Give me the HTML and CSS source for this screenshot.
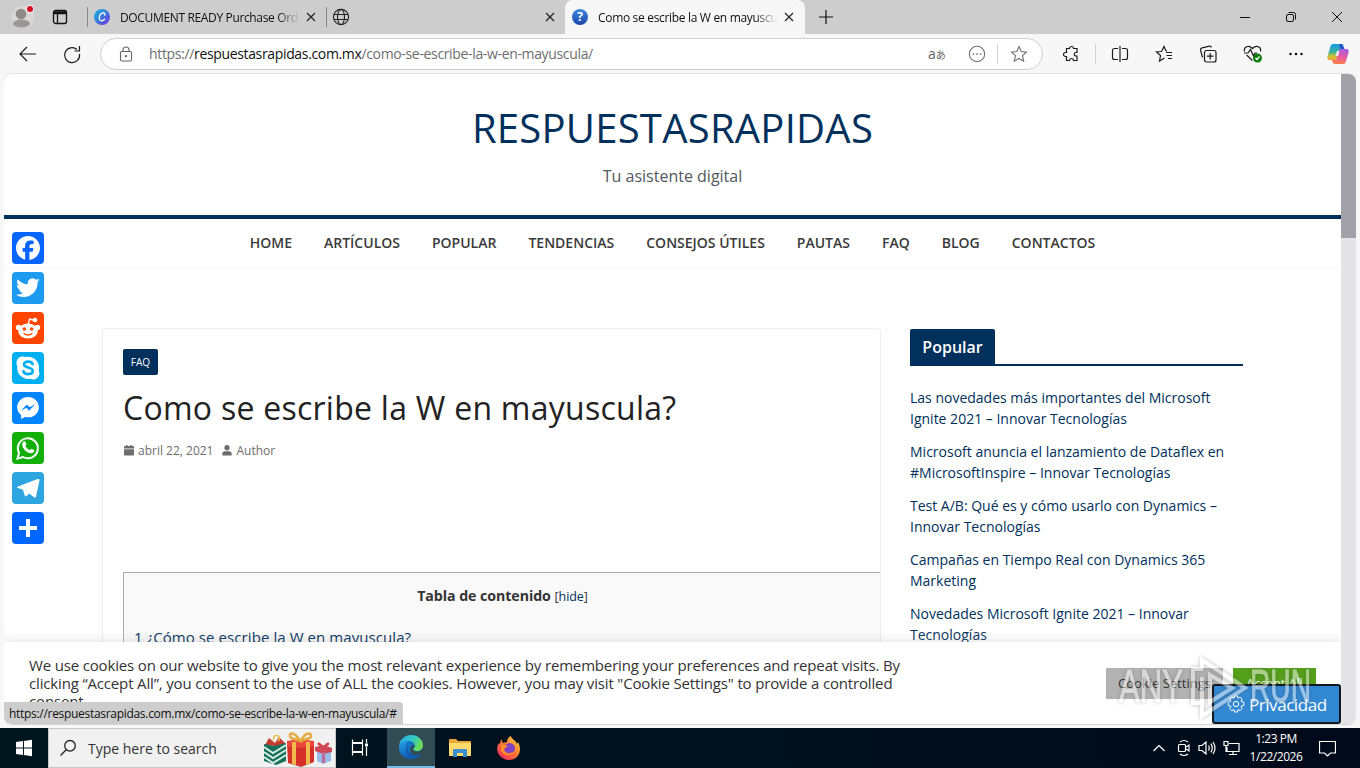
FILE: index.html
```html
<!DOCTYPE html>
<html lang="es">
<head>
<meta charset="utf-8">
<title>Como se escribe la W en mayuscula?</title>
<link rel="stylesheet" href="styles.css">
</head>
<body>
<div class="tabstrip">
  <svg class="profile" width="24" height="28" viewBox="0 0 24 28"><circle cx="12" cy="14" r="11" fill="#d9d8d6"/><circle cx="10" cy="11" r="5.3" fill="#8d8a87"/><ellipse cx="10.500" cy="20.500" rx="8.500" ry="4" fill="#9a9794"/><circle cx="19" cy="6" r="4" fill="#eee"/><circle cx="19" cy="6" r="3" fill="#d50f25"/></svg>
  <svg class="tabmenu" width="16" height="16" viewBox="0 0 16 16" fill="none" stroke="#111" stroke-width="1.300"><rect x="1.500" y="1.500" width="13" height="13" rx="2"/><path d="M1.500 3h13M1.500 4.500h13M5.500 4v10" /></svg>
  <div class="tab tab-one">
    <svg width="16" height="16" viewBox="0 0 16 16"><defs><linearGradient id="cv" x1="0" y1="0" x2="1" y2="1"><stop offset="0" stop-color="#12b9d5"/><stop offset=".5" stop-color="#3b79df"/><stop offset="1" stop-color="#7a2be0"/></linearGradient></defs><circle cx="8" cy="8" r="8" fill="url(#cv)"/><path d="M10.800 6.200c.3-1.800-.8-2.600-2-2.400C6.500 4.200 5 7 5.200 9.300c.3 2.900 3.200 3.600 5.500.9" fill="none" stroke="#fff" stroke-width="1.300" stroke-linecap="round"/></svg>
    <span class="tab-title t1">DOCUMENT READY Purchase Order</span>
    <svg class="x" width="10" height="10" viewBox="0 0 10 10"><path d="M1 1l8 8M9 1l-8 8"/></svg>
  </div>
  <div class="tab tab-two">
    <svg width="18" height="18" viewBox="0 0 18 18" fill="none" stroke="#222" stroke-width="1.100"><circle cx="9" cy="9" r="7.600"/><ellipse cx="9" cy="9" rx="3.500" ry="7.600"/><path d="M2 6.500h14M2 11.500h14"/></svg>
    <svg class="x" width="10" height="10" viewBox="0 0 10 10"><path d="M1 1l8 8M9 1l-8 8"/></svg>
  </div>
  <div class="tab tab-active">
    <span class="question">?</span>
    <span class="tab-title t3">Como se escribe la W en mayuscula</span>
    <svg class="x" width="10" height="10" viewBox="0 0 10 10"><path d="M1 1l8 8M9 1l-8 8"/></svg>
  </div>
  <svg class="plus" width="14" height="14" viewBox="0 0 14 14"><path d="M7 0v14M0 7h14" stroke="#111" stroke-width="1.200"/></svg>
  <div class="winctl">
    <svg width="46" height="34" viewBox="0 0 46 34"><path d="M18 17.500h10"/></svg>
    <svg width="46" height="34" viewBox="0 0 46 34"><rect x="18.500" y="14.500" width="7" height="7" rx="1.500"/><path d="M20.500 12.500h5a2 2 0 0 1 2 2v5"/></svg>
    <svg width="46" height="34" viewBox="0 0 46 34"><path d="M18 12l10 10M28 12l-10 10"/></svg>
  </div>
</div>
<div class="toolbar">
  <svg width="44" height="32" viewBox="0 0 44 32" class="ico back"><path d="M20 16h16M27 9l-7 7 7 7"/></svg>
  <svg width="44" height="32" viewBox="0 0 44 32" class="ico"><path d="M27 11.500A7.500 7.500 0 1 0 29.500 16M29.500 8v5h-5"/></svg>
  <div class="address">
    <svg class="lock" width="14" height="16" viewBox="0 0 14 16"><rect x="1.500" y="5.500" width="11" height="9.500" rx="1.500"/><path d="M4 5.500V4a3 3 0 0 1 6 0v1.500"/><circle cx="7" cy="10.200" r=".6"/></svg>
    <span class="url">https://<b>respuestasrapidas.com.mx</b>/como-se-escribe-la-w-en-mayuscula/</span>
    <span class="translate">a<small>あ</small></span>
    <svg class="gico more" width="18" height="18" viewBox="0 0 18 18"><circle cx="9" cy="9" r="7.700"/><path d="M4.700 9h1.500M8.300 9h1.500M11.800 9h1.500" stroke-width="1.600"/></svg>
    <i class="sep"></i>
    <svg class="gico star" width="18" height="18" viewBox="0 0 18 18"><path d="M9 1.500l2.200 5 5.300.6-4 3.600 1.200 5.500L9 13.500l-4.700 2.700 1.200-5.500-4-3.600 5.300-.6z"/></svg>
  </div>
  <svg class="ico ext" width="18" height="18" viewBox="0 0 18 18"><path d="M4.500 3.500h3a2 2 0 0 1 4 0H15v4h-1a1.700 1.700 0 0 0 0 3.500h1v4.500h-3.500a2 2 0 0 0-4 0h-3v-4h-1a2 2 0 0 1 0-4h1z"/></svg>
  <i class="sep sep2"></i>
  <svg class="ico split" width="18" height="18" viewBox="0 0 18 18"><path d="M7 3.500H3.500a2 2 0 0 0-2 2v7a2 2 0 0 0 2 2H7M11 3.500h3.500a2 2 0 0 1 2 2v7a2 2 0 0 1-2 2H11M9 1v16"/></svg>
  <svg class="ico fav" width="18" height="18" viewBox="0 0 18 18"><path d="M9.500 13l-5 3 1-5.500-4-3.500 5-.5L9 1.500l2 4.500M11 7.500h6M11.500 10.500H17M13 13.500h4M11 6h1"/></svg>
  <svg class="ico coll" width="18" height="18" viewBox="0 0 18 18"><rect x="5.500" y="5.500" width="11.500" height="11.500" rx="2"/><path d="M11.200 8v6.500M8 11.200h6.500M3.500 12.500L1.500 5a2 2 0 0 1 1.500-2.200L10.500 1.200a2 2 0 0 1 2 1.300"/></svg>
  <svg class="ico heart" width="20" height="20" viewBox="0 0 20 20"><path d="M1.500 7.500C.5 3 5.500.5 9.500 4.500c4-4 9-1.500 8 3M3.500 11l6 5.500M1 9h4l2.500-3.500L10.500 12l1.500-3h2"/><circle cx="14.500" cy="14" r="4.500" fill="#107c10" stroke="none"/><path d="M12.500 14l1.500 1.500 2.500-3" stroke="#fff"/></svg>
  <svg class="dots" width="16" height="4" viewBox="0 0 16 4"><circle cx="2.500" cy="2" r="1.200"/><circle cx="8" cy="2" r="1.200"/><circle cx="13.500" cy="2" r="1.200"/></svg>
  <svg class="copilot" width="22" height="22" viewBox="0 0 22 22"><defs><linearGradient id="c1" x1="0" y1="0" x2="0" y2="1"><stop offset="0" stop-color="#159bea"/><stop offset=".5" stop-color="#3bb39a"/><stop offset=".75" stop-color="#c8c834"/><stop offset="1" stop-color="#f6a031"/></linearGradient><linearGradient id="c2" x1="0.500" y1="0" x2="0.300" y2="1"><stop offset="0" stop-color="#a65ae0"/><stop offset=".5" stop-color="#ea5b9c"/><stop offset="1" stop-color="#fb8247"/></linearGradient></defs><path d="M6 1h8c2 0 2 1 2.600 3l.8 2H13l-3 9c-1 2-2 2-4 2H3c-3 0-3-2-2.200-5L3 5c.5-2 1-4 3-4z" fill="url(#c1)"/><path d="M12 1h2c2 0 2 1 2.600 3l.8 2H13z" fill="#2457c8"/><path d="M14 6h5c3 0 3 2 2.200 5L19 18c-.5 2-1 3-3 3H8c-2 0-2-1-2.600-2.500L5 17h4l3-9c.5-1.500 1-2 2-2z" fill="url(#c2)"/><path d="M10 8h2.500l-1.500 5H8.500z" fill="#f7eaf2"/></svg>
</div>
<div class="frame">
  <div class="page">
    <header class="site-head">
      <div class="site-title">RESPUESTASRAPIDAS</div>
      <div class="site-sub">Tu asistente digital</div>
    </header>
    <nav class="menu"><a>HOME</a><a>ARTÍCULOS</a><a>POPULAR</a><a>TENDENCIAS</a><a>CONSEJOS ÚTILES</a><a>PAUTAS</a><a>FAQ</a><a>BLOG</a><a>CONTACTOS</a></nav>
    <main class="cols">
      <article class="card">
        <span class="tag">FAQ</span>
        <h1>Como se escribe la W en mayuscula?</h1>
        <div class="meta">
          <svg width="10" height="11" viewBox="0 0 10 11"><path d="M2 0h1.500v1h3V0H8v1h1.200q.8 0 .8.800V3.500H0V1.800Q0 1 .8 1H2zM0 4.300h10v5.200q0 1-1 1H1q-1 0-1-1z"/></svg><span class="date">abril 22, 2021</span>
          <svg width="10" height="11" viewBox="0 0 10 11"><circle cx="5" cy="2.700" r="2.600"/><path d="M.3 10.500V9q0-2.700 2.700-2.700h4q2.700 0 2.700 2.700v1.500z"/></svg><span>Author</span>
        </div>
        <section class="toc">
          <p class="toc-title"><b>Tabla de contenido</b> <span>[<a>hide</a>]</span></p>
          <p class="toc-item">1 ¿Cómo se escribe la W en mayuscula?</p>
        </section>
      </article>
      <aside class="side">
        <h3><span>Popular</span></h3>
        <p>Las novedades más importantes del Microsoft<br>Ignite 2021 – Innovar Tecnologías</p>
        <p>Microsoft anuncia el lanzamiento de Dataflex en<br>#MicrosoftInspire – Innovar Tecnologías</p>
        <p>Test A/B: Qué es y cómo usarlo con Dynamics –<br>Innovar Tecnologías</p>
        <p>Campañas en Tiempo Real con Dynamics 365<br>Marketing</p>
        <p>Novedades Microsoft Ignite 2021 – Innovar<br>Tecnologías</p>
      </aside>
    </main>
    <div class="share">
      <svg class="fb" viewBox="0 0 32 32"><path fill="#fff" d="M28 16c0-6.627-5.373-12-12-12S4 9.373 4 16c0 5.628 3.875 10.350 9.101 11.647v-7.980h-2.474V16H13.100v-1.580c0-4.085 1.849-5.978 5.859-5.978.76 0 2.072.15 2.608.298v3.325c-.283-.03-.775-.045-1.386-.045-1.967 0-2.728.745-2.728 2.683V16h3.920l-.673 3.667h-3.247v8.245C23.395 27.195 28 22.135 28 16"/></svg>
      <svg class="tw" viewBox="0 0 32 32"><path fill="#fff" d="M28 8.557a10 10 0 0 1-2.828.775 4.930 4.930 0 0 0 2.166-2.725 9.700 9.700 0 0 1-3.130 1.194 4.920 4.920 0 0 0-3.593-1.550 4.924 4.924 0 0 0-4.794 6.049c-4.090-.21-7.720-2.170-10.150-5.150a4.940 4.940 0 0 0-.665 2.477c0 1.710.870 3.214 2.190 4.100a5 5 0 0 1-2.230-.616v.06c0 2.390 1.700 4.380 3.952 4.830-.414.115-.850.174-1.297.174q-.476-.001-.928-.860a4.935 4.935 0 0 0 4.600 3.420 9.900 9.900 0 0 1-6.114 2.107q-.597 0-1.175-.068a13.950 13.950 0 0 0 7.550 2.213c9.056 0 14.010-7.507 14.010-14.013q0-.320-.015-.637c.960-.695 1.795-1.560 2.455-2.550z"/></svg>
      <svg class="rd" viewBox="0 0 32 32"><ellipse cx="16" cy="19" rx="9.800" ry="7.500" fill="#fff"/><circle cx="6.500" cy="15.500" r="2.700" fill="#fff"/><circle cx="25.500" cy="15.500" r="2.700" fill="#fff"/><circle cx="23" cy="8" r="2.300" fill="#fff"/><path d="M16 13l1.500-6 4 1" fill="none" stroke="#fff" stroke-width="1.300"/><circle cx="12.300" cy="17" r="1.700" fill="#ff4500"/><circle cx="19.700" cy="17" r="1.700" fill="#ff4500"/><path d="M12 21.500q4 3 8 0" stroke="#ff4500" stroke-width="1.300" fill="none" stroke-linecap="round"/></svg>
      <svg class="sk" viewBox="0 0 32 32"><path fill="#fff" d="M4.500 10.500A6.300 6.300 0 0 1 13.500 5a11 11 0 0 1 13.200 13.500 6.300 6.300 0 0 1-8.500 8.300A11 11 0 0 1 5.300 14.200a6 6 0 0 1-.8-3.700z"/><path d="M20.500 12.200c-.8-3.600-8.800-3.300-8.500.4.300 3.700 8.800 2 8.800 6.500 0 4-8.600 4.200-9.400.2" fill="none" stroke="#00aff0" stroke-width="2.700" stroke-linecap="round"/></svg>
      <svg class="ms" viewBox="0 0 32 32"><path fill="#fff" d="M16 5C9.986 5 5.110 9.560 5.110 15.182c0 3.200 1.580 6.054 4.046 7.920V27l3.716-2.060c.990.276 2.040.425 3.128.425 6.014 0 10.890-4.560 10.890-10.183S22.013 5 16 5m1.147 13.655L14.330 15.730l-5.423 3 5.946-6.310 2.816 2.925 5.420-3z"/></svg>
      <svg class="wa" viewBox="0 0 32 32"><path fill="none" stroke="#fff" stroke-width="2" d="M5.500 26.500l1.500-5.600A10 10 0 1 1 11 25z"/><path fill="#fff" d="M11.600 9.600c.7-.7 1.500-.5 1.800.2l1 2.400c.2.600-.9 1.600-1 1.900.8 1.900 2.400 3.300 4.300 4 .5 0 1.300-1.600 1.800-1.400l2.400 1.200c1.200.600-.500 3.100-2.300 3.300-4.600.3-9.600-5.200-9.400-8.500 0-1.200.6-2.200 1.400-3.100z"/></svg>
      <svg class="tg" viewBox="0 0 32 32"><path fill="#fff" d="M25.515 6.896 6.027 14.410c-1.330.534-1.322 1.276-.243 1.606l5 1.560 1.972 6.048c.240.660.122.922.815.922.535 0 .770-.244 1.070-.533l2.500-2.430 5.100 3.800c.940.519 1.616.25 1.850-.87l3.330-15.700c.340-1.365-.520-1.984-1.416-1.580z"/></svg>
      <svg class="pl" viewBox="0 0 32 32"><path fill="#fff" d="M14 7h4v18h-4z"/><path fill="#fff" d="M7 14h18v4H7z"/></svg>
    </div>
    <div class="cookies">
      <p>We use cookies on our website to give you the most relevant experience by remembering your preferences and repeat visits. By<br>clicking “Accept All”, you consent to the use of ALL the cookies. However, you may visit "Cookie Settings" to provide a controlled<br>consent.</p>
      <div class="btns"><span class="set">Cookie Settings</span><span class="acc">Accept All</span></div>
    </div>
    <div class="privacy"><svg width="18" height="18" viewBox="0 0 18 18" fill="none" stroke="#fff"><circle cx="9" cy="9" r="2.700"/><path d="M7.500 1h3l.5 2.300 2-1.300 2.200 2.200L14 6.300l2.800.9v3.300L14 11.200l1.200 2.300-2.200 2.200-2-1.200-.5 2.500h-3L7 14.500l-2.200 1.200-2.200-2.200L4 11.300l-2.800-.8V7.200L4 6.300 2.600 4.200 4.800 2 7 3.300z" stroke-linejoin="round"/></svg><span>Privacidad</span></div>
    <div class="status">https://respuestasrapidas.com.mx/como-se-escribe-la-w-en-mayuscula/#</div>
  </div>
  <div class="scroll"><i></i></div>
</div>
<svg class="mark" width="220" height="72" viewBox="0 0 220 72"><g fill="#fff" stroke="#fff"><text x="19" y="53" textLength="64" lengthAdjust="spacingAndGlyphs">ANY</text><text x="150" y="53" textLength="61" lengthAdjust="spacingAndGlyphs">RUN</text></g><path d="M103 20h-10v34h10M102 28v39l43-28-11-8M102 20V11l43 28M110 26v27l22-14z" fill="none" stroke="#fff" stroke-width="4"/></svg>
<div class="taskbar">
  <svg class="start" width="48" height="40" viewBox="0 0 48 40"><path fill="#fff" d="M16 14l7-1v6.500h-7zM24 12.900l8-1.100v7.700h-8zM16 20.500h7V27l-7-1zM24 20.500h8v7.700L24 27z"/></svg>
  <div class="search">
    <svg width="18" height="18" viewBox="0 0 18 18" fill="none" stroke="#222" stroke-width="1.300"><circle cx="11" cy="6.800" r="5.300"/><path d="M7.200 10.700L1.500 16.500"/></svg>
    <span>Type here to search</span>
    <svg class="gifts" width="70" height="36" viewBox="0 0 70 36"><path d="M2 13l4-7 6 5 4-6 6 6v4z" fill="#c43a2f"/><path d="M11 8a3 3 0 1 1 4 1" fill="none" stroke="#e8c14b" stroke-width="1.500"/><path d="M1 12l10 2 12-3v18l-10 4-12-4z" fill="#17705a"/><path d="M1 15l9 6 13-8M1 20l9 6 13-8M1 25l9 6 13-8" fill="none" stroke="#d7efe4" stroke-width="2"/><path d="M24 12l12 2 15-3v19l-13 5-13-4z" fill="#d42f28"/><path d="M24 9l12-2 15 2v5l-14 2-13-2z" fill="#e9483a"/><path d="M29 10h4v23l-4-1zM43 10h4v22l-4 1z" fill="#f0b94c"/><path d="M37 9C31-2 24 1 28 6zM38 9C43-2 51 1 47 6z" fill="none" stroke="#e5a93e" stroke-width="2.500"/><path d="M54 18l7 1 7-1v11l-8 3-6-3z" fill="#9bbbe8"/><path d="M52 15l9-2 8 3v4l-9 2-8-3z" fill="#d04858"/><path d="M60 14c-5-7-8-2-3 0M61 14c4-7 8-2 3 0" fill="#d83c3c"/><path d="M59 20h3v11h-3z" fill="#bf6a98"/></svg>
  </div>
  <svg class="tv" width="48" height="40" viewBox="0 0 48 40" fill="none" stroke="#fff" stroke-width="1.200"><path d="M16.500 11.500v3h10v-3M16.500 27.500v-3h10v3M16.500 15.500h10v8h-10zM30.500 11v4M30.500 19v9"/><path d="M29 15.500h3v3h-3z" fill="#fff" stroke="none"/></svg>
  <div class="edge"><svg width="26" height="26" viewBox="0 0 26 26"><defs><linearGradient id="e1" x1="0" y1="0" x2="1" y2=".4"><stop offset="0" stop-color="#2aa9e8"/><stop offset=".6" stop-color="#35c9c6"/><stop offset="1" stop-color="#6bdd55"/></linearGradient><linearGradient id="e2" x1="0" y1="0" x2="0.300" y2="1"><stop offset="0" stop-color="#23a4e6"/><stop offset="1" stop-color="#0f5db5"/></linearGradient></defs><circle cx="13" cy="13" r="12" fill="#1473c4"/><path d="M1 12C2 5 7 1 13 1c7 0 12 5 12 10 0 4-3 6-6 6-3 0-4-1-4-2 1-1 2-2 2-3 0-3-3-5-7-5-4 0-8 2-9 5z" fill="url(#e1)"/><path d="M1 12c2-4 6-5 9-5-4 3-4 14 6 17.500C8 27 0 20 1 12z" fill="url(#e2)"/><path d="M10 12c-2 5 2 9 7 9 3 0 5-1 7-2-2 4-5 5.500-8 6-8-2-9-10-6-13z" fill="#1458a5"/><path d="M15 15c0 2 4 3 7 2 2-1 3-3 3-4l1 4-3 3-5 1c-4 0-6-3-6-5 0-3 2-5 4-5 1 1 0 3-1 4z" fill="#334b52"/></svg></div>
  <svg class="folder" width="22" height="18" viewBox="0 0 22 18"><path d="M0 1q0-1 1-1h6l2 2h12q1 0 1 1v14H0z" fill="#e8a93a"/><path d="M0 4h22v13H0z" fill="#ffd96b"/><path d="M4 18v-7q0-1 1-1h12q1 0 1 1v7h-4v-4H8v4z" fill="#3e8ed0"/></svg>
  <svg class="fox" width="24" height="24" viewBox="0 0 24 24"><defs><linearGradient id="f1" x1="1" y1="0" x2="0.200" y2="1"><stop offset="0" stop-color="#ffe04a"/><stop offset=".45" stop-color="#ff8a2b"/><stop offset="1" stop-color="#f0265e"/></linearGradient></defs><path d="M4 3l2 4 4-1c0-3 2-5 4-6 0 3 5 4 6 8l1-2c5 9 0 18-9 18S-2 15 1 9l1-2 1 1z" fill="url(#f1)"/><circle cx="12.500" cy="12.500" r="5.500" fill="#8241c4"/><path d="M4 9c3-1 4 0 7 1-1 2-4 1-4 4 2 4 7 4 10 1-1 5-10 6-13 0z" fill="#ff8c24"/></svg>
  <div class="tray">
    <svg width="14" height="8" viewBox="0 0 14 8"><path d="M1.500 7L7 1.500 12.500 7"/></svg>
    <svg class="cam" width="14" height="18" viewBox="0 0 14 18"><rect x="1.500" y="5.500" width="7" height="7" rx="1"/><path d="M9 8l3-2v6l-3-2M3 3q4-3 8 0M3 15q4 3 8 0"/></svg>
    <svg class="vol" width="18" height="16" viewBox="0 0 18 16"><path d="M1 5.500h3l4-3.500v12L4 10.500H1zM10.500 5.500q1.500 2.500 0 5M12.800 3.700q3 4.300 0 8.600M15 2q4 6 0 12"/></svg>
    <svg class="net" width="17" height="16" viewBox="0 0 17 16"><path d="M6 3.500h10v8H4V7M10 11.500v3M6 14.500h8M1 1.500h4v4H1zM3 6v6"/></svg>
    <div class="clock"><span>1:23 PM</span><span>1/22/2026</span></div>
    <svg class="note" width="17" height="17" viewBox="0 0 17 17"><path d="M.5 1.500h16v11.500h-5l-3 3-3-3h-5z"/></svg>
  </div>
</div>
</body>
</html>
```
FILE: styles.css
```css
* { box-sizing: border-box; }
body { margin: 0; width: 1360px; height: 768px; overflow: hidden; display: flex; flex-direction: column; position: relative; background: #f7f7f7; font-family: "Open Sans", "Noto Sans", sans-serif; }
svg { flex: none; display: block; }
p, h1, h3 { margin: 0; }

/* Browser tabs */
.tabstrip { height: 34px; flex: none; display: flex; align-items: center; background: #cdcdcd; color: #111; font-size: 12px; }
.profile { margin-left: 11px; }
.tabmenu { margin-left: 17px; }
.tab { display: flex; align-items: center; white-space: nowrap; }
.tab .x { stroke: #222; stroke-width: 1.2; margin-left: auto; }
.tab-title { overflow: hidden; -webkit-mask-image: linear-gradient(90deg, #000 88%, transparent); mask-image: linear-gradient(90deg, #000 88%, transparent); }
.tab-one { margin-left: 19px; width: 239px; height: 20px; border-left: 1px solid #888; padding-left: 6px; }
.t1 { width: 179px; margin-left: 10px; letter-spacing: -0.35px; }
.tab-one .x { margin-right: 10px; }
.tab-two { width: 239px; height: 20px; border-left: 1px solid #888; padding-left: 5px; }
.tab-two .x { margin-right: 10px; }
.tab-active { width: 240px; height: 34px; background: #f7f7f7; border-radius: 8px 8px 0 0; padding-left: 7px; }
.tab-active .x { margin-right: 11px; }
.question { width: 16px; height: 16px; border-radius: 50%; background: linear-gradient(#3f8be0, #1746a8); color: #fff; font-weight: 700; font-size: 12px; line-height: 16px; text-align: center; }
.t3 { width: 179px; margin-left: 10px; letter-spacing: -0.32px; }
.plus { margin-left: 14px; }
.winctl { display: flex; margin-left: auto; fill: none; stroke: #111; }

/* Toolbar */
.toolbar { height: 39px; flex: none; display: flex; align-items: center; }
.ico { fill: none; stroke: #1c1c1c; stroke-width: 1.2; }
.back { margin-right: 6px; }
.address { width: 943px; height: 32px; margin-left: 6px; border: 1px solid #d0d0d0; border-radius: 16px; background: #fff; display: flex; align-items: center; padding-left: 18px; }
.lock { fill: none; stroke: #666; stroke-width: 1.1; }
.url { margin-left: 16px; width: 779px; font-size: 14px; letter-spacing: -0.345px; color: #6e6e6e; white-space: nowrap; }
.url b { font-weight: 400; color: #111; }
.translate { width: 20px; font-size: 14px; line-height: 18px; color: #666; white-space: nowrap; }
.translate small { font-family: "Noto Sans CJK JP", sans-serif; font-size: 10px; line-height: 10px; }
.gico { fill: none; stroke: #707070; stroke-width: 1.1; }
.more { margin-left: 20px; }
.sep { width: 1px; height: 20px; background: #d2d2d2; margin-left: 11px; }
.star { margin-left: 12px; }
.ext { margin-left: 19px; }
.sep2 { margin-left: 15px; }
.split { margin-left: 15px; }
.fav { margin-left: 26px; }
.coll { margin-left: 26px; }
.heart { margin-left: 26px; }
.dots { margin-left: 25px; }
.copilot { margin-left: 23px; }

/* Page viewport */
.frame { height: 652px; flex: none; margin: 0 4px; border-top: 1px solid #e2e2e2; border-bottom: 1px solid #d4d4d4; border-radius: 8px; overflow: hidden; display: flex; background: #fff; }
.page { width: 1337px; height: 650px; position: relative; overflow: hidden; }
.scroll { width: 15px; background: #e4e4e6; }
.scroll i { display: block; height: 164px; background: #a2a1a9; }
.site-head { height: 145px; border-bottom: 4px solid #00305b; text-align: center; padding-top: 27px; }
.site-title { font-size: 40px; line-height: 54px; letter-spacing: 0.25px; color: #00305b; }
.site-sub { font-size: 16px; line-height: 24px; margin-top: 9px; color: #51575d; }
.menu { height: 49px; border-bottom: 1px solid #f6f6f6; display: flex; justify-content: center; gap: 32px; font-size: 14px; font-weight: 600; line-height: 48px; color: #3a3a3a; }
.cols { display: flex; padding: 60px 0 0 98px; }
.card { width: 779px; height: 600px; border: 1px solid #eee; border-radius: 4px; padding: 20px 0 0 20px; display: flex; flex-direction: column; align-items: flex-start; overflow: hidden; }
.tag { width: 35px; height: 26px; background: #00305b; border-radius: 2px; color: #fff; font-size: 10px; font-weight: 500; line-height: 27px; text-align: center; }
.card h1 { margin-top: 12px; font-size: 32px; line-height: 42px; letter-spacing: 0.26px; font-weight: 400; color: #222; white-space: nowrap; }
.meta { margin-top: 12px; height: 18px; display: flex; align-items: center; font-size: 12px; color: #6d6d6d; padding-left: 1px; fill: #6d6d6d; }
.meta span { margin-left: 4px; }
.meta .date { margin-right: 9px; }
.toc { margin-top: 113px; width: 758px; height: 300px; background: #f9f9f9; border: 1px solid #aaa; border-right: 0; padding: 10px; color: #333; }
.toc-title { text-align: center; font-size: 14.2px; line-height: 26px; letter-spacing: -0.06px; }
.toc-title span { font-size: 12.5px; }
.toc-title a, .toc-item { color: #00305b; }
.toc-item { font-size: 15px; line-height: 24px; margin-top: 15px; letter-spacing: 0.08px; }
.side { width: 333px; margin-left: 29px; color: #00305b; font-size: 14px; line-height: 21px; white-space: nowrap; }
.side h3 { display: flex; height: 37px; margin-top: 1px; border-bottom: 2px solid #00305b; margin-bottom: 21px; }
.side h3 span { width: 85px; background: #00305b; color: #fff; font-size: 16px; font-weight: 600; line-height: 36px; text-align: center; border-radius: 2px 2px 0 0; }
.side p { margin-bottom: 12px; }

/* Floating share column */
.share { position: absolute; left: 8px; top: 158px; display: flex; flex-direction: column; gap: 8px; }
.share svg { width: 32px; height: 32px; border-radius: 4px; }
.share .fb { background: #0866ff; }
.share .tw { background: #1d9bf0; }
.share .rd { background: #ff4500; }
.share .sk { background: #00aff0; }
.share .ms { background: #0084ff; }
.share .wa { background: #12af0a; }
.share .tg { background: #2ca5e0; }
.share .pl { background: #0166ff; }

/* Overlays */
.cookies { position: absolute; left: 0; bottom: 0; width: 1337px; height: 82px; background: #fff; box-shadow: 0 -1px 10px rgba(172,171,171,.35); display: flex; color: #333; }
.cookies p { margin: 14px 0 0 25px; width: 1077px; font-size: 15px; line-height: 18px; letter-spacing: -0.16px; white-space: nowrap; }
.btns { display: flex; gap: 10px; margin-top: 26px; font-size: 13px; line-height: 31px; text-align: center; height: 31px; }
.set { width: 117px; background: #b2b2b2; }
.acc { width: 83px; background: #55a01a; color: #fff; font-size: 12.5px; }
.privacy { position: absolute; left: 1208px; bottom: 0; width: 129px; height: 40px; border: 2px solid #111820; border-radius: 3px; background: #3388d2; color: #fff; display: flex; align-items: center; padding-left: 13px; gap: 4px; font-size: 17px; letter-spacing: -0.45px; }
.status { position: absolute; left: 0; bottom: 0; width: 399px; height: 22px; background: #cdcdcd; border-radius: 0 4px 0 0; padding-left: 5px; font-size: 12px; line-height: 23px; letter-spacing: -0.3px; white-space: nowrap; color: #111; }
.mark { position: absolute; left: 1100px; top: 649px; opacity: .5; font: 46px "Liberation Sans", sans-serif; filter: drop-shadow(0 0 2px rgba(70,70,70,.7)); }

/* Taskbar */
.taskbar { height: 40px; margin-top: 3px; flex: none; display: flex; align-items: center; background: linear-gradient(90deg, #00161f, #000a1a); color: #fff; }
.search { width: 288px; height: 40px; background: #f1f1f1; border: 1px solid #c9c9c9; display: flex; align-items: center; padding-left: 10px; color: #333; font-size: 14px; }
.search span { margin-left: 11px; width: 175px; white-space: nowrap; }
.gifts { margin-top: 3px; }
.edge { width: 48px; height: 40px; margin-left: 3px; background: #334b52; border-bottom: 2px solid #76b9ed; display: flex; align-items: center; justify-content: center; }
.folder { margin-left: 14px; }
.fox { margin-left: 26px; }
.tray { margin-left: auto; display: flex; align-items: center; fill: none; stroke: #fff; stroke-width: 1.2; }
.cam { margin-left: 11px; }
.vol { margin-left: 7px; }
.net { margin-left: 7px; }
.clock { margin-left: 6px; width: 60px; display: flex; flex-direction: column; align-items: center; font-size: 12px; line-height: 18px; letter-spacing: -0.45px; stroke: none; white-space: nowrap; }
.note { margin-left: 13px; margin-right: 24px; }
```
